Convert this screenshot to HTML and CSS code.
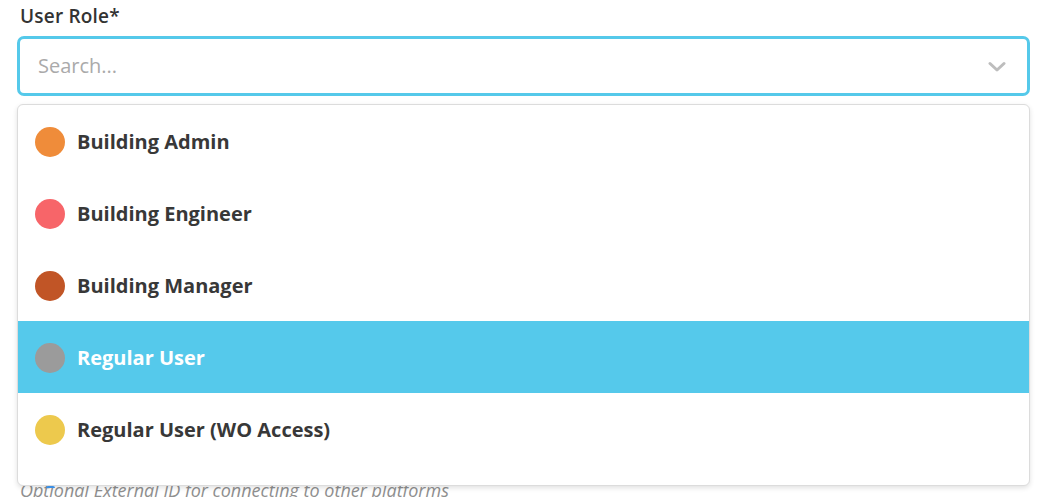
FILE: index.html
```html
<!DOCTYPE html>
<html>
<head>
<meta charset="utf-8">
<link rel="stylesheet" href="styles.css">
</head>
<body>
<div class="field">
  <label class="label">User Role*</label>
  <div class="select">
    <input class="search" type="text" placeholder="Search...">
    <svg class="chevron" width="18" height="12" viewBox="0 0 18 12"><path d="M2 2.5 L9 9 L16 2.5" fill="none" stroke="#bdbdbd" stroke-width="3" stroke-linecap="round" stroke-linejoin="round"/></svg>
  </div>
  <div class="under">
    <ul class="menu">
      <li class="option"><span class="dot orange"></span>Building Admin</li>
      <li class="option"><span class="dot red"></span>Building Engineer</li>
      <li class="option"><span class="dot brown"></span>Building Manager</li>
      <li class="option active"><span class="dot gray"></span>Regular User</li>
      <li class="option"><span class="dot yellow"></span>Regular User (WO Access)</li>
      <li class="option"><span class="dot blue"></span>Tenant</li>
    </ul>
    <span class="peek"></span>
  </div>
  <p class="hint">Optional External ID for connecting to other platforms</p>
</div>
</body>
</html>
```
FILE: styles.css
```css
html, body {
  margin: 0;
  padding: 0;
  background: #fff;
  font-family: "Open Sans", "Noto Sans", sans-serif;
}
.field {
  padding: 4px 24px 0 17px;
}
.label {
  display: block;
  font-size: 19px;
  font-weight: 600;
  letter-spacing: 0.2px;
  color: #333;
  line-height: 24px;
  padding-left: 3px;
  margin-bottom: 8px;
}
.select {
  position: relative;
  height: 60px;
  box-sizing: border-box;
  border: 3px solid #55c9ea;
  border-radius: 7px;
  display: flex;
  align-items: center;
}
.search {
  border: none;
  outline: none;
  background: transparent;
  flex: 1;
  font-family: "Open Sans", "Noto Sans", sans-serif;
  font-size: 20px;
  color: #333;
  padding: 0 0 2px 18px;
}
.search::placeholder {
  color: #aaaaaa;
}
.chevron {
  margin-right: 21px;
  margin-top: 2px;
}
.under {
  position: relative;
  z-index: 1;
  padding-top: 8px;
}
.peek {
  position: absolute;
  left: 29px;
  bottom: -2px;
  width: 9px;
  height: 2px;
  border-radius: 4px 4px 0 0;
  background: #3b8fe4;
}
.hint {
  margin: -7px 0 0 3px;
  font-size: 18px;
  line-height: 23px;
  font-style: italic;
  color: #8f8f8f;
  white-space: nowrap;
}
.menu {
  position: relative;
  list-style: none;
  margin: 0;
  padding: 0;
  height: 382px;
  overflow: hidden;
  background: #fff;
  border: 1px solid #dcdcdc;
  border-radius: 6px;
  box-shadow: 0 2px 5px rgba(0,0,0,0.12);
  box-sizing: border-box;
}
.option {
  height: 72px;
  box-sizing: border-box;
  display: flex;
  align-items: center;
  gap: 12px;
  padding-left: 17px;
  font-size: 20px;
  font-weight: 700;
  color: #383838;
}
.option.active {
  background: #55c9eb;
  color: #fff;
}
.dot {
  width: 30px;
  height: 30px;
  border-radius: 50%;
  flex: none;
  margin-top: 1px;
}
.orange { background: #ef8c3a; }
.red { background: #f76569; }
.brown { background: #c15526; }
.gray { background: #9b9b9b; }
.yellow { background: #edc94d; }
.blue { background: #3b8fe4; }
```
